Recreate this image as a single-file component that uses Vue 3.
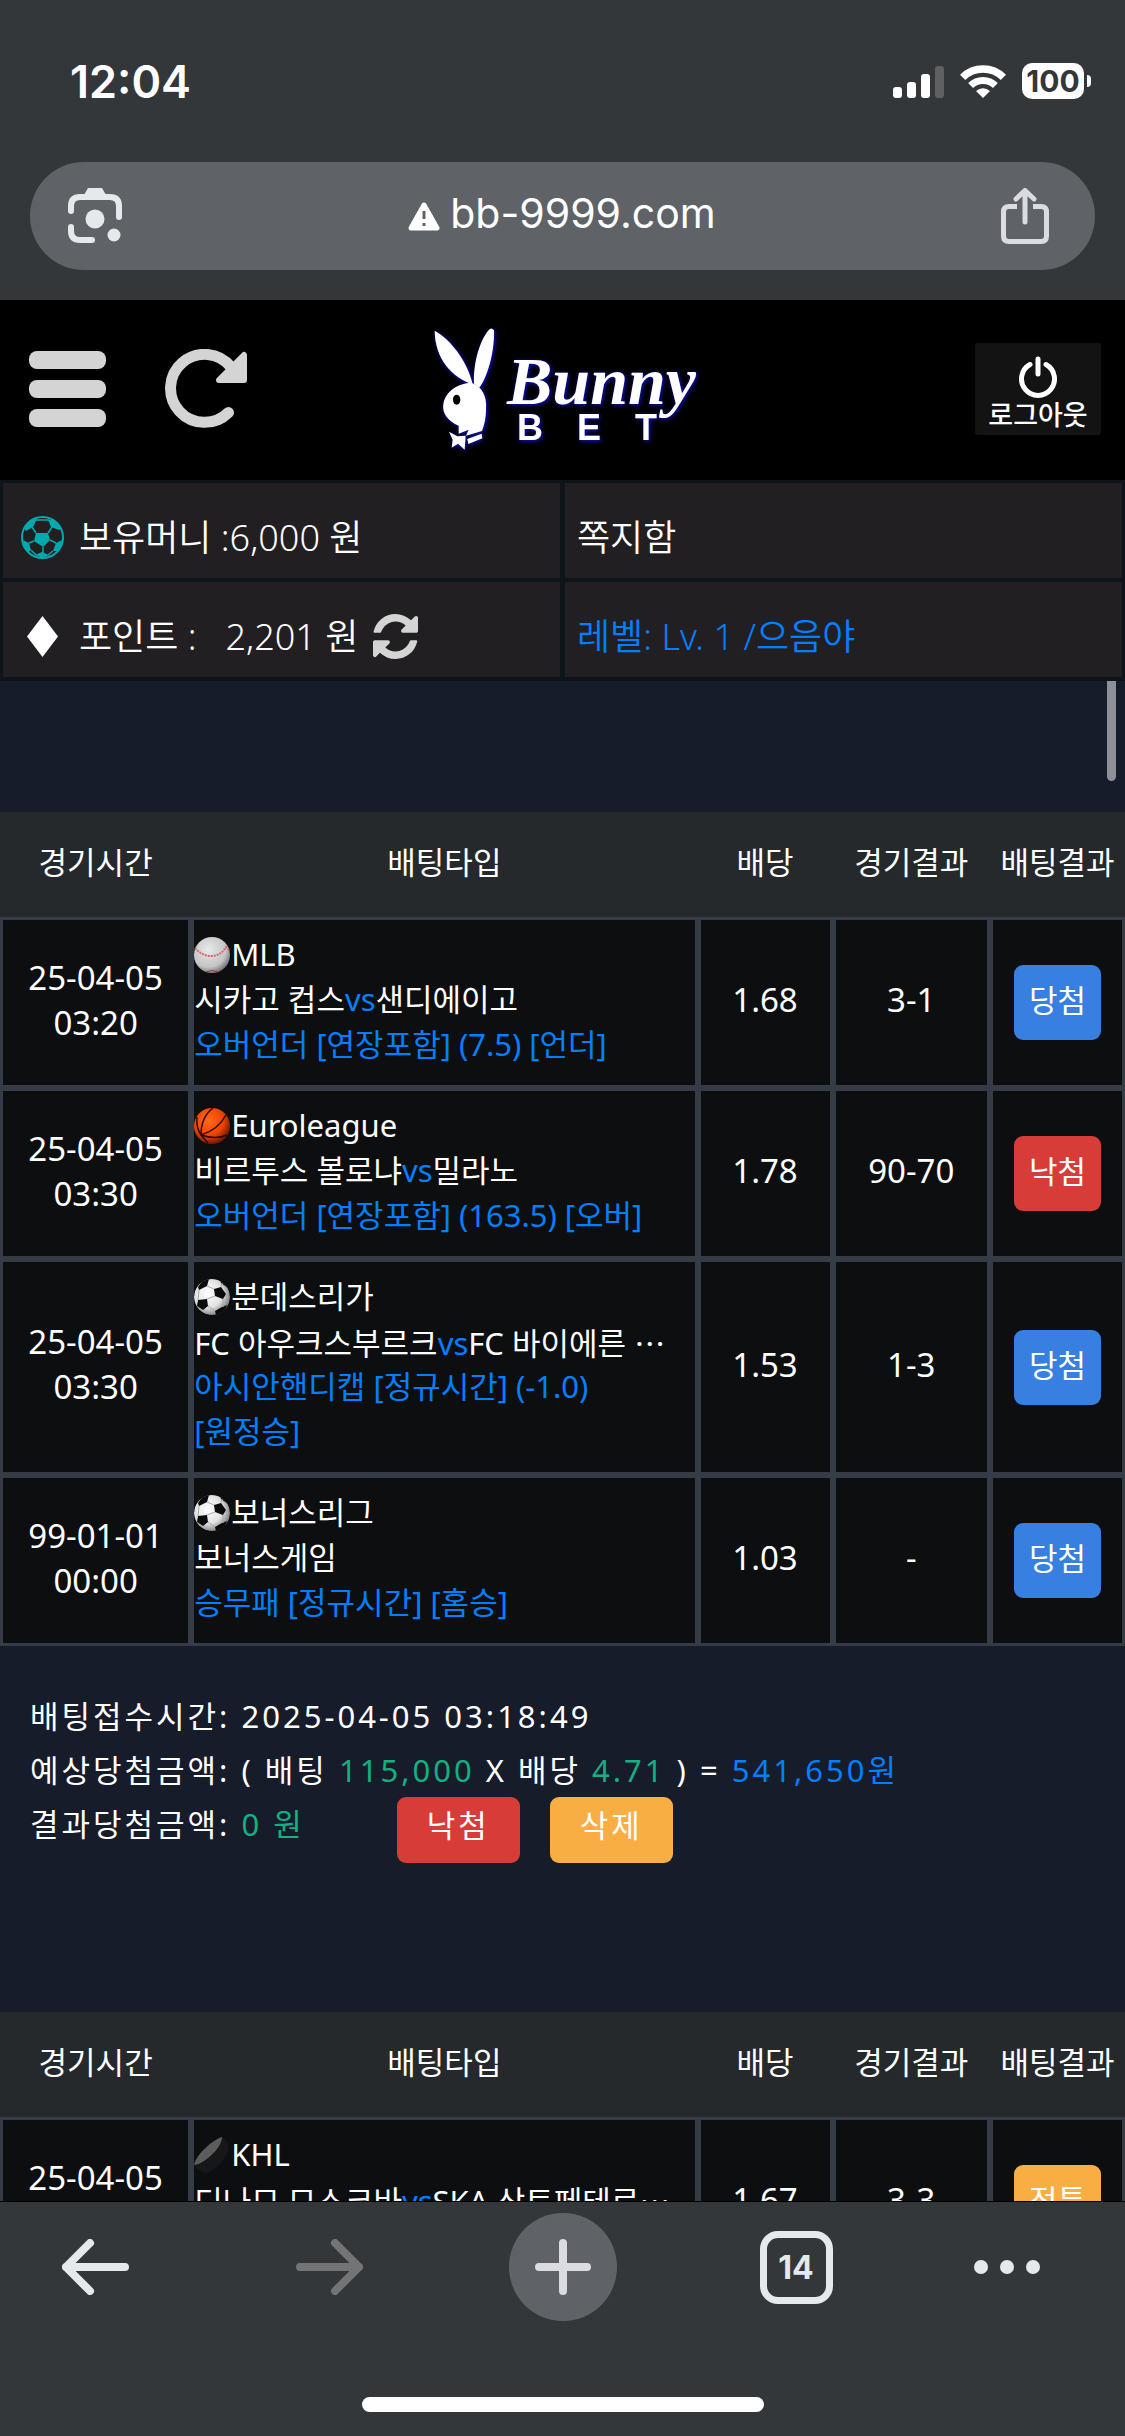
<script setup>
import { ref } from 'vue'

const columns = ['경기시간', '배팅타입', '배당', '경기결과', '배팅결과']

const slips = ref([
  {
    id: 1,
    games: [
      { date: '25-04-05', time: '03:20', sport: 'baseball', league: 'MLB', home: '시카고 컵스', away: '샌디에이고', pick: '오버언더 [연장포함] (7.5) [언더]', odds: '1.68', score: '3-1', result: '당첨', color: 'blue' },
      { date: '25-04-05', time: '03:30', sport: 'basketball', league: 'Euroleague', home: '비르투스 볼로냐', away: '밀라노', pick: '오버언더 [연장포함] (163.5) [오버]', odds: '1.78', score: '90-70', result: '낙첨', color: 'red' },
      { date: '25-04-05', time: '03:30', sport: 'soccer', league: '분데스리가', home: 'FC 아우크스부르크', away: 'FC 바이에른 ', more: true, pick: '아시안핸디캡 [정규시간] (-1.0) [원정승]', odds: '1.53', score: '1-3', result: '당첨', color: 'blue' },
      { date: '99-01-01', time: '00:00', sport: 'soccer', league: '보너스리그', home: '보너스게임', pick: '승무패 [정규시간] [홈승]', odds: '1.03', score: '-', result: '당첨', color: 'blue' },
    ],
    summary: { time: '2025-04-05 03:18:49', stake: '115,000', odds: '4.71', expected: '541,650원', paid: '0 원' },
  },
  {
    id: 2,
    games: [
      { date: '25-04-05', time: '', sport: 'hockey', league: 'KHL', home: '디나모 모스크바', away: 'SKA 상트페테르', more: true, pick: '', odds: '1.67', score: '3-3', result: '적특', color: 'orange' },
    ],
  },
])
</script>

<template>
  <div class="screen">
    <div class="status">
      <span class="clock">12:04</span>
      <div class="status__icons">
        <svg width="51" height="33" viewBox="0 0 51 33" fill="#fff">
          <rect x="0" y="22" width="9" height="11" rx="3" />
          <rect x="14" y="17" width="9" height="16" rx="3" />
          <rect x="28" y="9" width="9" height="24" rx="3" />
          <rect x="42" y="1" width="9" height="32" rx="3" fill="#5f6062" />
        </svg>
        <svg width="46" height="33" viewBox="0 0 46 33" fill="none" stroke="#fff">
          <path d="M2.6 12.4A29 29 0 0 1 43.4 12.4" stroke-width="7.5" />
          <path d="M10.6 20.5A17.7 17.7 0 0 1 35.4 20.5" stroke-width="7" />
          <path d="M23 33L16 26Q23 20.500 30 26Z" fill="#fff" stroke="none" />
        </svg>
        <span class="battery">100</span>
      </div>
    </div>

    <div class="address">
      <button class="icon-btn" aria-label="lens">
        <svg width="55" height="56" viewBox="0 0 55 56" fill="none" stroke="#e5e9ec" stroke-width="6" stroke-linecap="round">
          <path d="M3 23V18Q3 9 12 9H42Q51 9 51 18V29" />
          <path d="M3 39V43Q3 52 12 52H24" />
          <path d="M16 7L20 0H34L38 7Z" fill="#e5e9ec" stroke="none" />
          <circle cx="27" cy="31" r="9.500" fill="#e5e9ec" stroke="none" />
          <circle cx="46" cy="47" r="6.500" fill="#e5e9ec" stroke="none" />
        </svg>
      </button>
      <a class="url" href="#">
        <svg width="32" height="29" viewBox="0 0 32 29">
          <path d="M16 3L29 26H3Z" fill="#fff" stroke="#fff" stroke-width="5" stroke-linejoin="round" />
          <path d="M16 9V17M16 21V24" stroke="#5f6368" stroke-width="3" />
        </svg>
        <span>bb-9999.com</span>
      </a>
      <button class="icon-btn" aria-label="share">
        <svg width="48" height="57" viewBox="0 0 48 57" fill="none" stroke="#dadce1" stroke-width="5" stroke-linecap="round" stroke-linejoin="round">
          <path d="M16 18.500H8Q2.500 18.500 2.500 24V48Q2.500 53.500 8 53.500H40Q45.500 53.500 45.500 48V24Q45.500 18.500 40 18.500H32" stroke-linecap="butt" />
          <path d="M24 34V3M15 11L24 2.500L33 11" />
        </svg>
      </button>
    </div>

    <header class="header">
      <div class="header__left">
        <button class="icon-btn" aria-label="menu">
          <svg width="77" height="76" viewBox="0 0 77 76" fill="#d4d4d4">
            <rect width="77" height="18" rx="8" />
            <rect y="29" width="77" height="18" rx="8" />
            <rect y="58" width="77" height="18" rx="8" />
          </svg>
        </button>
        <button class="icon-btn" aria-label="reload">
          <svg width="83" height="80" viewBox="0 0 83 80" fill="none" stroke="#d4d4d4" stroke-linejoin="round">
            <path d="M66 18A34 34 0 1 0 63.500 63.500" stroke-width="11" stroke-linecap="round" />
            <path d="M79 6V31H54Z" fill="#d4d4d4" stroke-width="6" />
          </svg>
        </button>
      </div>
      <svg class="logo" width="320" height="160" viewBox="0 0 320 160">
        <g transform="scale(.3333)">
          <path d="M104 65C150 90 202 155 218 226C155 205 105 150 104 65Z" />
          <path d="M264 66Q272 52 282 64C284 130 262 205 238 236L222 224C220 160 240 95 264 66Z" />
          <path d="M215 222C245 232 262 262 258 300C258 330 252 350 246 366L198 380L206 362L176 374L176 350C140 335 126 310 130 285C138 245 175 222 215 222Z" />
          <ellipse cx="170" cy="272" rx="11" ry="15" class="eye" />
          <path d="M147 368L172 382L197 380L194 422L174 404L155 416L158 392Z" />
          <path d="M202 390L245 374L247 388L205 405Z" />
        </g>
        <text x="107" y="95" class="logo__name">Bunny</text>
        <text x="117" y="131" class="logo__sub">B</text>
        <text x="177" y="131" class="logo__sub">E</text>
        <text x="235" y="131" class="logo__sub">T</text>
      </svg>
      <button class="logout">
        <svg width="40" height="42" viewBox="0 0 40 42" fill="none" stroke="#fff" stroke-width="5" stroke-linecap="round">
          <path d="M12 8.500A16.500 16.500 0 1 0 28 8.500M20 3V18" />
        </svg>
        로그아웃
      </button>
    </header>

    <div class="info">
      <div class="info__cell">
        <svg width="43" height="43" viewBox="0 0 43 43" fill="#05a9ad">
          <circle cx="21.500" cy="21.500" r="20.500" fill="none" stroke="#05a9ad" stroke-width="2" />
          <path d="M15 17H27L29 24L22 31L13 25ZM9 4L16 3L12 11L5 15L3 12ZM33 4L27 4L30 11L38 14L40 12ZM2 24L8 27L10 34L7 36L3 30ZM41 24L35 27L32 35L36 35L40 30ZM14 39L21 36L28 39L22 42Z" />
          <path d="M15 17L11 11M27 17L31 11M13 25L8 27M22 31V37M29 24L35 27M14 4H28M10 34L15 39M32 35L27 39" stroke="#05a9ad" stroke-width="1.500" />
        </svg>
        <span>보유머니 :6,000 원</span>
      </div>
      <a class="info__cell" href="#">쪽지함</a>
      <div class="info__cell">
        <svg width="43" height="43" viewBox="0 0 43 43"><path d="M21.500 1L37 21.500L21.500 42L6 21.500Z" fill="#fff" /></svg>
        <span>포인트 :</span>
        <span class="point">2,201 원</span>
        <button class="icon-btn" aria-label="refresh point">
          <svg width="45" height="45" viewBox="0 0 1536 1536" fill="#d4d4d4">
            <path d="M1511 928q0 5-1 7-64 268-268 434.500t-478 166.500q-146 0-282.500-55t-243.500-157l-129 129q-19 19-45 19t-45-19-19-45v-448q0-26 19-45t45-19h448q26 0 45 19t19 45-19 45l-137 137q71 66 161 102t187 36q134 0 250-65t186-179q11-17 53-117 8-23 30-23h192q13 0 22.500 9.500t9.500 22.500zm25-800v448q0 26-19 45t-45 19h-448q-26 0-45-19t-19-45 19-45l138-138q-148-137-349-137-134 0-250 65t-186 179q-11 17-53 117-8 23-30 23h-199q-13 0-22.500-9.500t-9.500-22.500v-7q65-268 270-434.500t480-166.500q146 0 284 55.500t245 156.500l130-129q19-19 45-19t45 19 19 45z" />
          </svg>
        </button>
      </div>
      <div class="info__cell info__cell--level">레벨: Lv. 1 /으음야</div>
    </div>

    <main class="content">
      <span class="scroll-thumb"></span>
      <section v-for="slip in slips" :key="slip.id">
        <table class="bets">
          <colgroup>
            <col class="col-time"><col class="col-type"><col class="col-odds"><col class="col-score"><col class="col-result">
          </colgroup>
          <thead>
            <tr>
              <th v-for="column in columns" :key="column">{{ column }}</th>
            </tr>
          </thead>
          <tbody>
            <tr v-for="game in slip.games" :key="game.league">
              <td class="num">
                <div class="line">{{ game.date }}</div>
                <div class="line">{{ game.time }}</div>
              </td>
              <td class="type">
                <div class="league">
                  <svg v-if="game.sport === 'baseball'" width="36" height="36" viewBox="0 0 36 36">
                    <defs>
                      <radialGradient id="baseball" cx=".4" cy=".35" r=".7"><stop offset="0" stop-color="#e8e8e8" /><stop offset=".7" stop-color="#c4c4c4" /><stop offset="1" stop-color="#666" /></radialGradient>
                    </defs>
                    <circle cx="18" cy="18" r="18" fill="url(#baseball)" />
                    <path d="M1 11Q8 19 17 19Q27 19 32 10L35 13" fill="none" stroke="#d4686a" stroke-width="2" stroke-dasharray="2 1" />
                    <path d="M12 35Q18 32 24 35" fill="none" stroke="#a33" />
                  </svg>
                  <svg v-else-if="game.sport === 'basketball'" width="36" height="36" viewBox="0 0 36 36">
                    <defs>
                      <radialGradient id="basketball" cx=".4" cy=".35" r=".7"><stop offset="0" stop-color="#ff6a1c" /><stop offset=".6" stop-color="#ee4300" /><stop offset="1" stop-color="#5a1200" /></radialGradient>
                    </defs>
                    <circle cx="18" cy="18" r="18" fill="url(#basketball)" />
                    <path d="M19 0Q7 9 7 27M32 7Q24 22 7 27M7 27Q22 32 33 27M3 9Q2 20 7 27L14 35" fill="none" stroke="#2a0a00" stroke-width="1.500" />
                  </svg>
                  <svg v-else-if="game.sport === 'soccer'" width="36" height="36" viewBox="0 0 36 36">
                    <defs>
                      <radialGradient id="soccer" cx=".4" cy=".4" r=".65"><stop offset="0" stop-color="#fff" /><stop offset=".6" stop-color="#e2e2e2" /><stop offset="1" stop-color="#777" /></radialGradient>
                      <clipPath id="ball"><circle cx="18" cy="18" r="18" /></clipPath>
                    </defs>
                    <g clip-path="url(#ball)">
                      <circle cx="18" cy="18" r="18" fill="url(#soccer)" />
                      <path d="M4 8L9 1L15 0L13 7L5 11ZM20 10L27 8L32 15L29 20L21 17ZM4 21L13 20L14 27L9 31L3 27ZM21 32L28 28L33 26L30 34L22 36ZM26 0L33 6L34 9L27 4Z" fill="#0b0b0b" />
                      <path d="M13 7L20 10M5 11L4 21M13 20L21 17M14 27L21 32M29 20L29 28M27 8L28 4" stroke="#aaa" fill="none" />
                    </g>
                  </svg>
                  <svg v-else width="36" height="36" viewBox="0 0 36 36">
                    <path d="M28 0Q36 4 34 14Q26 32 12 36Q3 34 0 28Z" fill="#171717" />
                    <path d="M28 0C20 2 2 17 0 28C8 28 28 12 28 0Z" fill="#5c5c5c" />
                  </svg>
                  <span>{{ game.league }}</span>
                </div>
                <div class="line match">{{ game.home }}<template v-if="game.away"><em>vs</em>{{ game.away }}</template><span v-if="game.more" class="more">…</span></div>
                <div class="pick">{{ game.pick }}</div>
              </td>
              <td class="num">{{ game.odds }}</td>
              <td class="num">{{ game.score }}</td>
              <td class="result"><span class="badge" :class="game.color">{{ game.result }}</span></td>
            </tr>
          </tbody>
        </table>

        <div v-if="slip.summary" class="summary">
          <p>배팅접수시간: {{ slip.summary.time }}</p>
          <p>예상당첨금액: ( 배팅 <b>{{ slip.summary.stake }}</b> X 배당 <b>{{ slip.summary.odds }}</b> ) = <i>{{ slip.summary.expected }}</i></p>
          <div class="summary__row">
            <p>결과당첨금액: <b>{{ slip.summary.paid }}</b></p>
            <div class="actions">
              <button class="red">낙첨</button>
              <button class="orange">삭제</button>
            </div>
          </div>
        </div>
      </section>
    </main>

    <footer class="toolbar">
      <nav class="toolbar__nav">
        <button class="icon-btn" aria-label="back">
          <svg width="67" height="56" viewBox="0 0 67 56" fill="none" stroke="#e5e9ec" stroke-width="8" stroke-linecap="round" stroke-linejoin="round"><path d="M28 4L4 28L28 52M4 28H63" /></svg>
        </button>
        <button class="icon-btn" aria-label="forward">
          <svg width="67" height="56" viewBox="0 0 67 56" fill="none" stroke="#727476" stroke-width="8" stroke-linecap="round" stroke-linejoin="round"><path d="M39 4L63 28L39 52M63 28H4" /></svg>
        </button>
        <button class="icon-btn new-tab" aria-label="new tab">
          <svg width="56" height="56" viewBox="0 0 56 56" stroke="#dadce1" stroke-width="8" stroke-linecap="round"><path d="M28 4V52M4 28H52" /></svg>
        </button>
        <button class="icon-btn tabs">14</button>
        <button class="icon-btn" aria-label="more">
          <svg width="68" height="16" viewBox="0 0 68 16" fill="#e5e9ec"><circle cx="8" cy="8" r="7" /><circle cx="34" cy="8" r="7" /><circle cx="60" cy="8" r="7" /></svg>
        </button>
      </nav>
      <span class="home-bar"></span>
    </footer>
  </div>
</template>

<style>
  body {
    margin: 0;
    background-color: #33373a;
  }
</style>

<style scoped>
  .screen {
    display: flex;
    flex-direction: column;
    height: 100vh;
    overflow: hidden;
    background-color: #33373a;
    color: #fff;
    font-family: "Noto Sans", "Noto Sans CJK KR", sans-serif;
    font-weight: 400;
    font-size: 31px;
    line-height: 45px;
  }
  button {
    border: 0;
    padding: 0;
    color: #fff;
    font: inherit;
    cursor: pointer;
  }
  a {
    color: inherit;
    text-decoration: none;
  }
  svg {
    display: block;
    flex: none;
  }
  p {
    margin: 0;
  }
  .icon-btn {
    display: flex;
    align-items: center;
    justify-content: center;
    background: none;
  }

  .status {
    display: flex;
    flex: none;
    align-items: center;
    justify-content: space-between;
    height: 164px;
    box-sizing: border-box;
    padding: 0 38px 2px 70px;
    font-family: Inter, sans-serif;
  }
  .clock {
    font-size: 45px;
    font-weight: 600;
  }
  .status__icons {
    display: flex;
    align-items: center;
    gap: 16px;
  }
  .battery {
    position: relative;
    width: 62px;
    height: 36px;
    margin-right: 3px;
    border-radius: 10px;
    background-color: #fff;
    color: #33373a;
    font-size: 30px;
    font-weight: 700;
    line-height: 36px;
    text-align: center;
  }
  .battery::after {
    content: '';
    position: absolute;
    top: 12px;
    right: -7px;
    width: 4px;
    height: 12px;
    border-radius: 0 6px 6px 0;
    background-color: #fff;
  }

  .address {
    display: flex;
    flex: none;
    align-items: center;
    justify-content: space-between;
    height: 108px;
    box-sizing: border-box;
    margin: -2px 30px 30px;
    padding: 0 46px 0 38px;
    border-radius: 54px;
    background-color: #5f6368;
  }
  .url {
    display: flex;
    align-items: center;
    gap: 10px;
    font-family: Inter, sans-serif;
    font-size: 41px;
    font-weight: 400;
  }
  .url span {
    padding-bottom: 6px;
  }

  .header {
    display: grid;
    flex: none;
    grid-template-columns: 1fr auto 1fr;
    align-items: center;
    height: 180px;
    box-sizing: border-box;
    padding: 0 24px 2px 29px;
    background-color: #000;
  }
  .header__left {
    display: flex;
    align-items: center;
    gap: 59px;
  }
  .logo {
    margin-right: 10px;
    fill: #fff;
    filter: drop-shadow(1px 1px 2px #1414e0);
  }
  .eye {
    fill: #000;
  }
  .logo__name {
    font: italic 700 68px "Liberation Serif", serif;
  }
  .logo__sub {
    font: 700 36px "Liberation Sans", sans-serif;
  }
  .logout {
    display: flex;
    flex-direction: column;
    align-items: center;
    justify-self: end;
    width: 126px;
    height: 92px;
    padding-top: 13px;
    border-radius: 3px;
    background-color: #131313;
    font-size: 27px;
    font-weight: 500;
    line-height: 34px;
  }

  .info {
    display: grid;
    flex: none;
    grid-template-columns: 1fr 1fr;
    grid-auto-rows: 95px;
    gap: 4px 5px;
    padding: 3px 3px 4px;
    background-color: #0d151a;
    font-size: 36px;
    font-weight: 350;
  }
  .info__cell {
    display: flex;
    align-items: center;
    gap: 15px;
    padding: 13px 14px 0 18px;
    background-color: #211f22;
  }
  a.info__cell,
  .info__cell--level {
    padding-left: 12px;
  }
  .info__cell--level {
    color: #0080ff;
  }
  .point {
    margin-left: 14px;
  }

  .content {
    position: relative;
    flex: 1;
    min-height: 0;
    padding-top: 131px;
    overflow: hidden;
    border-bottom: 1px solid #000;
    background-color: #171c2b;
  }
  .scroll-thumb {
    position: absolute;
    top: 0;
    right: 9px;
    width: 9px;
    height: 100px;
    border-radius: 0 0 5px 5px;
    background-color: #8e9098;
  }

  .bets {
    width: 100%;
    table-layout: fixed;
    border-spacing: 0;
    text-align: center;
  }
  .col-time { width: 17%; }
  .col-type { width: 45%; }
  .col-odds { width: 12%; }
  .col-score { width: 14%; }
  .col-result { width: 12%; }
  .bets th {
    height: 101px;
    padding: 0 0 4px;
    background-color: #25292b;
    font-weight: 400;
    white-space: nowrap;
  }
  .bets td {
    padding: 12px 0 18px;
    border: 3px solid #353c46;
    background-color: #0d0e10;
  }
  .bets .num {
    font-size: 33px;
  }
  .bets .type {
    text-align: left;
    word-break: keep-all;
  }
  .bets .result {
    padding: 15px 0;
  }
  .line {
    height: 45px;
  }
  .league {
    display: flex;
    align-items: center;
    gap: 1px;
  }
  .match {
    overflow: hidden;
    white-space: nowrap;
  }
  .match em,
  .pick {
    color: #0080ff;
    font-style: normal;
  }
  .pick {
    min-height: 45px;
  }
  .more {
    font-family: "Noto Sans CJK KR", sans-serif;
  }
  .badge {
    display: inline-block;
    width: 87px;
    height: 75px;
    border-radius: 9px;
    line-height: 70px;
    vertical-align: middle;
  }
  .blue { background-color: #377fe0; }
  .red { background-color: #d83c38; }
  .orange { background-color: #f9ae44; }

  .summary {
    padding: 43px 30px 149px;
    font-size: 31px;
    line-height: 54px;
    letter-spacing: 3px;
  }
  .summary b {
    color: #12b082;
    font-weight: 400;
  }
  .summary i {
    color: #0080ff;
    font-style: normal;
  }
  .summary__row {
    display: flex;
    gap: 92px;
  }
  .actions {
    display: flex;
    gap: 30px;
  }
  .actions button {
    width: 123px;
    height: 66px;
    padding-bottom: 10px;
    border-radius: 9px;
    letter-spacing: 3px;
  }

  .toolbar {
    display: flex;
    flex: none;
    flex-direction: column;
    align-items: center;
    gap: 76px;
    padding: 11px 0 24px;
  }
  .toolbar__nav {
    display: grid;
    grid-template-columns: 190fr 278fr 190fr 276fr 146fr;
    place-items: center;
    width: 96%;
    align-self: flex-start;
  }
  .new-tab {
    width: 108px;
    height: 108px;
    border-radius: 50%;
    background-color: #5f6368;
  }
  .tabs {
    width: 73px;
    height: 73px;
    border: 7px solid #e5e9ec;
    border-radius: 18px;
    color: #e5e9ec;
    font-family: Inter, sans-serif;
    font-size: 32px;
    font-weight: 700;
  }
  .home-bar {
    width: 402px;
    height: 15px;
    border-radius: 8px;
    background-color: #fff;
  }
</style>
